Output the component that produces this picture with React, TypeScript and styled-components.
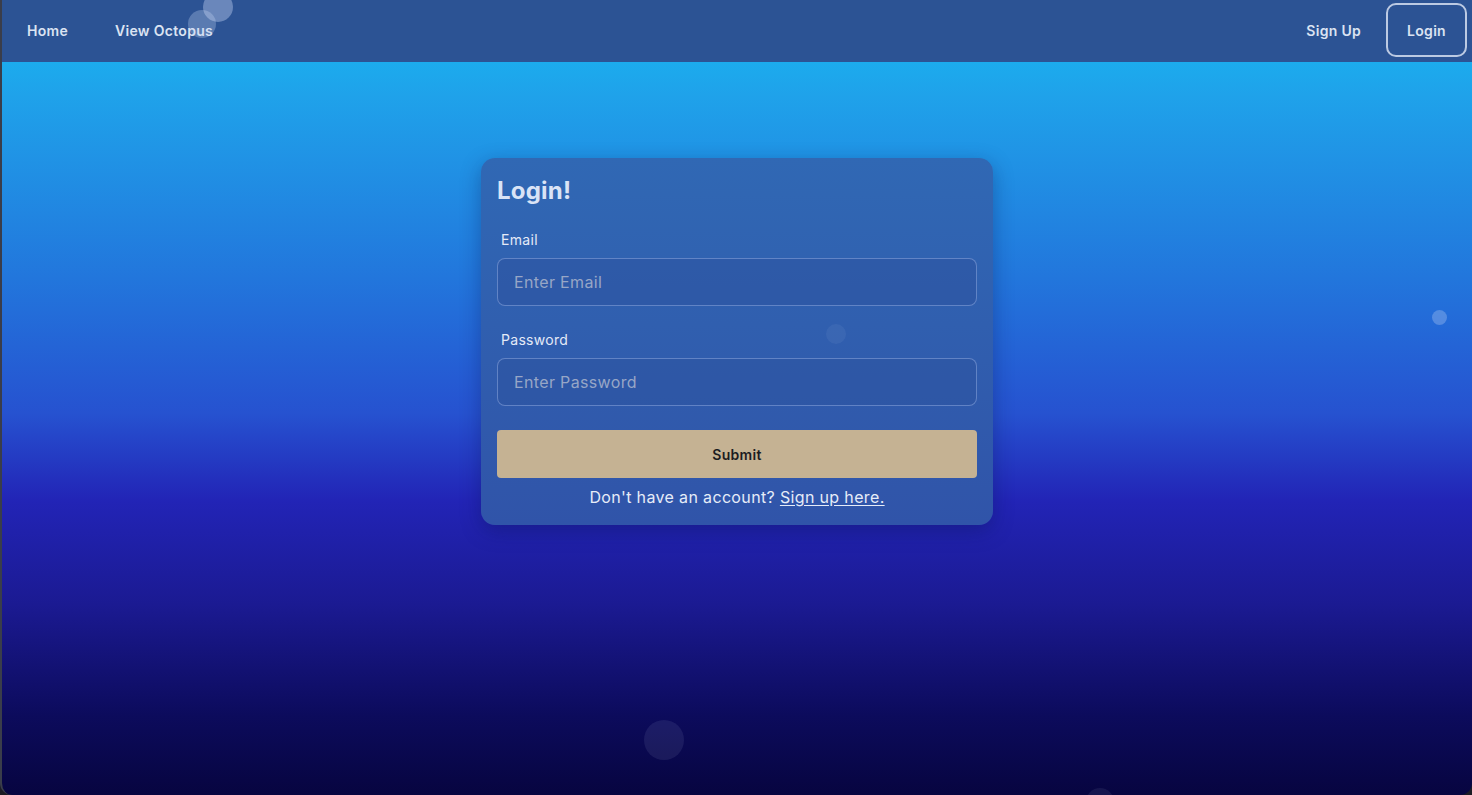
import React from "react";
import styled, { createGlobalStyle } from "styled-components";

const Global = createGlobalStyle`
  html, body { margin: 0; padding: 0; height: 100%; }
  body { font-family: Inter, "Noto Sans", sans-serif; background: #1c1c24; }
  * { box-sizing: border-box; }
`;

const Frame = styled.div`
  width: 1472px;
  height: 795px;
  display: flex;
  flex-direction: column;
  position: relative;
  overflow: hidden;
  border-left: 2px solid #3a3d4a;
  border-radius: 0 0 12px 12px;
  background: linear-gradient(180deg, #16bcf3 0%, #1fa2ea 12%, #2276dc 35%, #2652d0 52%, #2224b6 63%, #1b1a92 76%, #0c0b5c 90%, #070540 100%);
`;

const NavBar = styled.nav`
  height: 62px;
  flex: 0 0 62px;
  background: #2c5394;
  display: flex;
  align-items: flex-start;
  justify-content: space-between;
  padding: 3px 5px 0 4px;
  position: relative;
  z-index: 1;
`;

const NavGroup = styled.div`
  display: flex;
  align-items: center;
`;

const NavLink = styled.a<{ $outlined?: boolean; $gap?: number }>`
  color: #dbe3f2;
  font-size: 14px;
  font-weight: 600;
  letter-spacing: 0.3px;
  text-decoration: none;
  padding: 0 19px;
  height: 54px;
  display: flex;
  align-items: center;
  border-radius: 10px;
  border: 2px solid ${(p) => (p.$outlined ? "rgba(225,232,246,0.8)" : "transparent")};
  cursor: pointer;
  margin-left: ${(p) => p.$gap ?? 0}px;
`;

const Main = styled.main`
  flex: 1;
  display: flex;
  justify-content: center;
  align-items: flex-start;
  padding-top: 96px;
  position: relative;
`;

const Card = styled.form`
  width: 512px;
  padding: 16px 16px 0;
  height: 367px;
  border-radius: 14px;
  background: linear-gradient(180deg, #3068b4 0%, #3054a9 100%);
  box-shadow: 0 6px 20px rgba(10, 20, 80, 0.35);
  display: flex;
  flex-direction: column;
  position: relative;
  z-index: 1;
`;

const Title = styled.h1`
  margin: 2px 0 0;
  font-size: 24px;
  font-weight: 700;
  letter-spacing: 0.2px;
  color: #d9e3f6;
  line-height: 30px;
`;

const Field = styled.div<{ $top: number }>`
  display: flex;
  flex-direction: column;
  margin-top: ${(p) => p.$top}px;
`;

const Label = styled.label`
  font-size: 14px;
  letter-spacing: 0.3px;
  color: #e4eaf7;
  padding-left: 4px;
  line-height: 18px;
  margin-bottom: 9px;
`;

const Input = styled.input`
  height: 48px;
  width: 100%;
  border-radius: 8px;
  border: 1px solid rgba(160, 185, 235, 0.45);
  background: rgba(46, 84, 160, 0.55);
  padding: 0 16px;
  font-family: Inter, "Noto Sans", sans-serif;
  font-size: 16px;
  letter-spacing: 0.35px;
  color: #e4eaf7;
  outline: none;
  &::placeholder { color: #97a6c6; }
`;

const Submit = styled.button`
  margin-top: 24px;
  height: 48px;
  width: 100%;
  border: none;
  border-radius: 4px;
  background: #c5b293;
  color: #1c1c22;
  font-family: Inter, "Noto Sans", sans-serif;
  font-size: 14px;
  font-weight: 600;
  letter-spacing: 0.3px;
  cursor: pointer;
`;

const Footer = styled.p`
  margin: 9px 0 0;
  text-align: center;
  font-size: 16px;
  letter-spacing: 0.35px;
  color: #e6ecf8;
  line-height: 20px;
`;

const FooterLink = styled.a`
  color: #e6ecf8;
  text-decoration: underline;
  text-underline-offset: 2px;
`;

const Bubble = styled.span<{ $x: number; $y: number; $r: number; $o: number }>`
  position: absolute;
  left: ${(p) => p.$x - p.$r}px;
  top: ${(p) => p.$y - p.$r}px;
  width: ${(p) => p.$r * 2}px;
  height: ${(p) => p.$r * 2}px;
  border-radius: 50%;
  background: rgba(200, 215, 245, ${(p) => p.$o});
  pointer-events: none;
  z-index: 2;
`;

const bubbles = [
  { x: 200, y: 24, r: 14, o: 0.3 },
  { x: 216, y: 7, r: 15, o: 0.4 },
  { x: 834, y: 334, r: 10, o: 0.07 },
  { x: 1437, y: 317, r: 7.5, o: 0.3 },
  { x: 662, y: 740, r: 20, o: 0.09 },
  { x: 1098, y: 802, r: 14, o: 0.08 },
];

export default function App() {
  return (
    <>
      <Global />
      <Frame>
        <NavBar>
          <NavGroup>
            <NavLink>Home</NavLink>
            <NavLink $gap={5}>View Octopus</NavLink>
          </NavGroup>
          <NavGroup>
            <NavLink>Sign Up</NavLink>
            <NavLink $outlined $gap={4}>Login</NavLink>
          </NavGroup>
        </NavBar>
        <Main>
          <Card onSubmit={(e) => e.preventDefault()}>
            <Title>Login!</Title>
            <Field $top={25}>
              <Label>Email</Label>
              <Input placeholder="Enter Email" />
            </Field>
            <Field $top={25}>
              <Label>Password</Label>
              <Input type="password" placeholder="Enter Password" />
            </Field>
            <Submit type="submit">Submit</Submit>
            <Footer>
              Don't have an account? <FooterLink>Sign up here.</FooterLink>
            </Footer>
          </Card>
        </Main>
        {bubbles.map((b, i) => (
          <Bubble key={i} $x={b.x} $y={b.y} $r={b.r} $o={b.o} />
        ))}
      </Frame>
    </>
  );
}
